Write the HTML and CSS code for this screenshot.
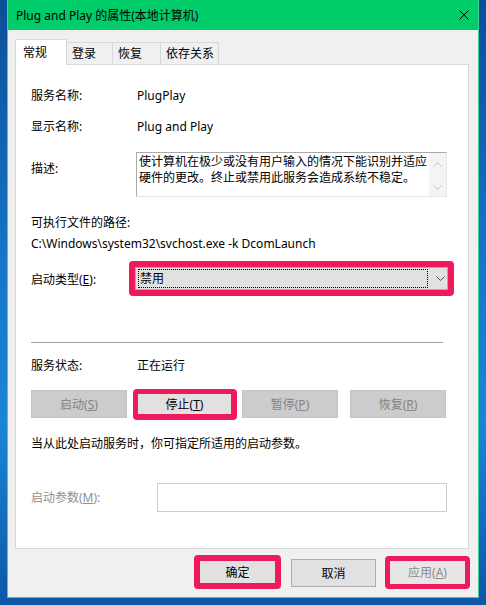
FILE: index.html
```html
<!DOCTYPE html>
<html lang="zh-CN">
<head>
  <meta charset="UTF-8" />
  <title>Plug and Play 的属性(本地计算机)</title>
  <link rel="stylesheet" href="styles.css">
</head>
<body>

  <div class="window">
    <div class="titlebar">
      <span class="title">Plug and Play 的属性(本地计算机)</span>
      <svg class="close" width="10" height="10" viewBox="0 0 10 10">
        <path d="M0.5 0.5L9.5 9.5M9.5 0.5L0.5 9.5" stroke="#000" stroke-width="1" fill="none"/>
      </svg>
    </div>

    <div class="content">
      <div class="tabs">
        <div class="tab active">常规</div>
        <div class="tab t2">登录</div>
        <div class="tab t3">恢复</div>
        <div class="tab t4">依存关系</div>
      </div>

      <div class="panel">
        <div class="row r-name">
          <span class="label">服务名称:</span>
          <span>PlugPlay</span>
        </div>

        <div class="row r-display">
          <span class="label">显示名称:</span>
          <span>Plug and Play</span>
        </div>

        <div class="row r-desc">
          <span class="label">描述:</span>
          <div class="desc-box">
            <div class="desc-text">使计算机在极少或没有用户输入的情况下能识别并适应<br>硬件的更改。终止或禁用此服务会造成系统不稳定。</div>
            <div class="vscroll">
              <svg width="9" height="5" viewBox="0 0 9 5"><path d="M0.5 4.5L4.5 0.5L8.5 4.5" stroke="#c4c4c4" fill="none"/></svg>
              <svg width="9" height="5" viewBox="0 0 9 5"><path d="M0.5 0.5L4.5 4.5L8.5 0.5" stroke="#c4c4c4" fill="none"/></svg>
            </div>
          </div>
        </div>

        <div class="row r-path-label">可执行文件的路径:</div>
        <div class="row r-path">C:\Windows\system32\svchost.exe -k DcomLaunch</div>

        <div class="row r-type">
          <span class="label">启动类型(<u>E</u>):</span>
          <div class="hl hl-select">
            <div class="select">
              <div class="focus">禁用</div>
              <svg class="arrow" width="9" height="5" viewBox="0 0 9 5"><path d="M0.5 0.5L4.5 4.5L8.5 0.5" stroke="#505050" fill="none"/></svg>
            </div>
          </div>
        </div>

        <div class="sep"></div>

        <div class="row r-status">
          <span class="label">服务状态:</span>
          <span>正在运行</span>
        </div>

        <div class="btnrow">
          <button class="btn disabled b-start">启动(<u>S</u>)</button>
          <div class="hl hl-stop">
            <button class="btn b-stop">停止(<u>T</u>)</button>
          </div>
          <button class="btn disabled b-pause">暂停(<u>P</u>)</button>
          <button class="btn disabled b-resume">恢复(<u>R</u>)</button>
        </div>

        <div class="row r-hint">当从此处启动服务时，你可指定所适用的启动参数。</div>

        <div class="row r-param">
          <span class="label muted">启动参数(<u>M</u>):</span>
          <div class="param-input"></div>
        </div>
      </div>

      <div class="footer">
        <div class="hl hl-ok">
          <button class="btn b-ok">确定</button>
        </div>
        <button class="btn b-cancel">取消</button>
        <div class="hl hl-apply">
          <button class="btn b-apply">应用(<u>A</u>)</button>
        </div>
      </div>
    </div>
  </div>

</body>
</html>
```

FILE: styles.css
```css
body {
  margin: 0;
  width: 486px;
  height: 605px;
  overflow: hidden;
  background: linear-gradient(180deg, #0b4e98 0%, #1677c9 45%, #1a86d6 70%, #0c57a6 100%);
  font-family: "Noto Sans", "Noto Sans CJK SC", sans-serif;
  font-size: 12px;
  color: #000;
}

.window {
  margin-left: 7px;
  width: 472px;
  height: 598px;
  box-sizing: border-box;
  border: 1px solid #3fcfa0;
  border-top: 0;
  background: #f0f0f0;
}

.titlebar {
  height: 30px;
  background: #00cc6a;
  display: flex;
  align-items: center;
  justify-content: space-between;
  padding: 0 9px 0 8px;
}

.title {
  line-height: 17px;
}

.content {
  padding: 9px 9px 0 7px;
}

/* tabs */
.tabs {
  display: flex;
  align-items: flex-end;
  height: 26px;
  margin-bottom: -1px;
  position: relative;
  z-index: 1;
}

.tab {
  box-sizing: border-box;
  height: 22px;
  margin-bottom: 1px;
  border: 1px solid #d9d9d9;
  border-left: 0;
  border-bottom: 0;
  background: #f0f0f0;
  padding: 2px 0 0 5px;
  line-height: 17px;
}

.tab.active {
  width: 52px;
  height: 26px;
  margin-bottom: 0;
  border-left: 1px solid #d9d9d9;
  background: #fff;
  padding: 4px 0 0 7px;
}

.t2 { width: 46px; }
.t3 { width: 48px; }
.t4 { width: 58px; }

/* panel */
.panel {
  height: 485px;
  box-sizing: border-box;
  border: 1px solid #d9d9d9;
  background: #fff;
  padding: 0 15px;
}

.row {
  display: flex;
  align-items: center;
  line-height: 17px;
}

.label {
  width: 106px;
  flex: none;
}

.r-name { margin-top: 22px; }
.r-display { margin-top: 14px; }

.r-desc {
  margin-top: 17px;
  align-items: flex-start;
}

.r-desc .label {
  width: 105px;
  padding-top: 8px;
}

.desc-box {
  display: flex;
  width: 311px;
  height: 45px;
  box-sizing: border-box;
  border: 1px solid #e6e6e6;
  border-top-color: #a9a9a9;
  border-left-color: #a9a9a9;
}

.desc-text {
  flex: 1;
  padding: 1px 0 0 2px;
  line-height: 16px;
  white-space: nowrap;
}

.vscroll {
  width: 17px;
  background: #f4f4f4;
  display: flex;
  flex-direction: column;
  align-items: center;
  justify-content: space-between;
  padding: 9px 0 6px;
  box-sizing: border-box;
}

.r-path-label { margin-top: 17px; }
.r-path { margin-top: 4px; }

.r-type { margin-top: 9px; }

.r-type .label {
  width: 98px;
  padding-top: 2px;
}

/* pink highlight frames */
.hl {
  border: 6px solid #ef1a5c;
  border-radius: 4px;
  flex: none;
}

.select {
  width: 313px;
  height: 23px;
  box-sizing: border-box;
  border: 1px solid #adadad;
  background: #e1e1e1;
  display: flex;
  align-items: center;
  padding-left: 2px;
}

.focus {
  width: 290px;
  height: 19px;
  box-sizing: border-box;
  border: 1px dotted #000;
  padding-left: 1px;
  line-height: 17px;
}

.arrow {
  margin-left: 8px;
}

.sep {
  margin-top: 46px;
  width: 412px;
  height: 1px;
  background: #a0a0a0;
}

.r-status { margin-top: 14px; }

/* buttons */
.btn {
  box-sizing: border-box;
  border: 1px solid #adadad;
  background: #e1e1e1;
  font: inherit;
  color: #000;
  padding: 0;
  line-height: 17px;
  display: flex;
  align-items: center;
  justify-content: center;
}

.btn.disabled {
  background: #cccccc;
  border-color: #c4c4c4;
  color: #838383;
}

.btnrow {
  display: flex;
  align-items: flex-start;
  height: 28px;
  margin-top: 16px;
}

.btnrow .btn {
  width: 96px;
  height: 28px;
}

.hl-stop {
  margin: -1px 0 0 6px;
  border-width: 5px 6px 6px 5px;
}

.btnrow .b-stop {
  width: 93px;
  height: 20px;
  border: 0;
}

.btnrow .b-pause { margin-left: 5px; }
.btnrow .b-resume { margin-left: 12px; }

.r-hint { margin-top: 17px; }

.r-param { margin-top: 31px; }

.r-param .label {
  width: 126px;
}

.muted {
  color: #8f8f8f;
}

.param-input {
  width: 290px;
  height: 29px;
  box-sizing: border-box;
  border: 1px solid #cccccc;
}

/* footer */
.footer {
  display: flex;
  justify-content: flex-end;
  align-items: flex-start;
  margin: 6px -1px 0 0;
}

.b-ok {
  width: 75px;
  height: 22px;
  border: 0;
}

.b-cancel {
  width: 85px;
  height: 28px;
  margin: 4px 0 0 10px;
}

.hl-apply {
  margin: 1px 0 0 9px;
  border-width: 5px;
}

.b-apply {
  width: 75px;
  height: 23px;
  border: 0;
  background: #e6e6e6;
  color: #8a8a8a;
}
```
